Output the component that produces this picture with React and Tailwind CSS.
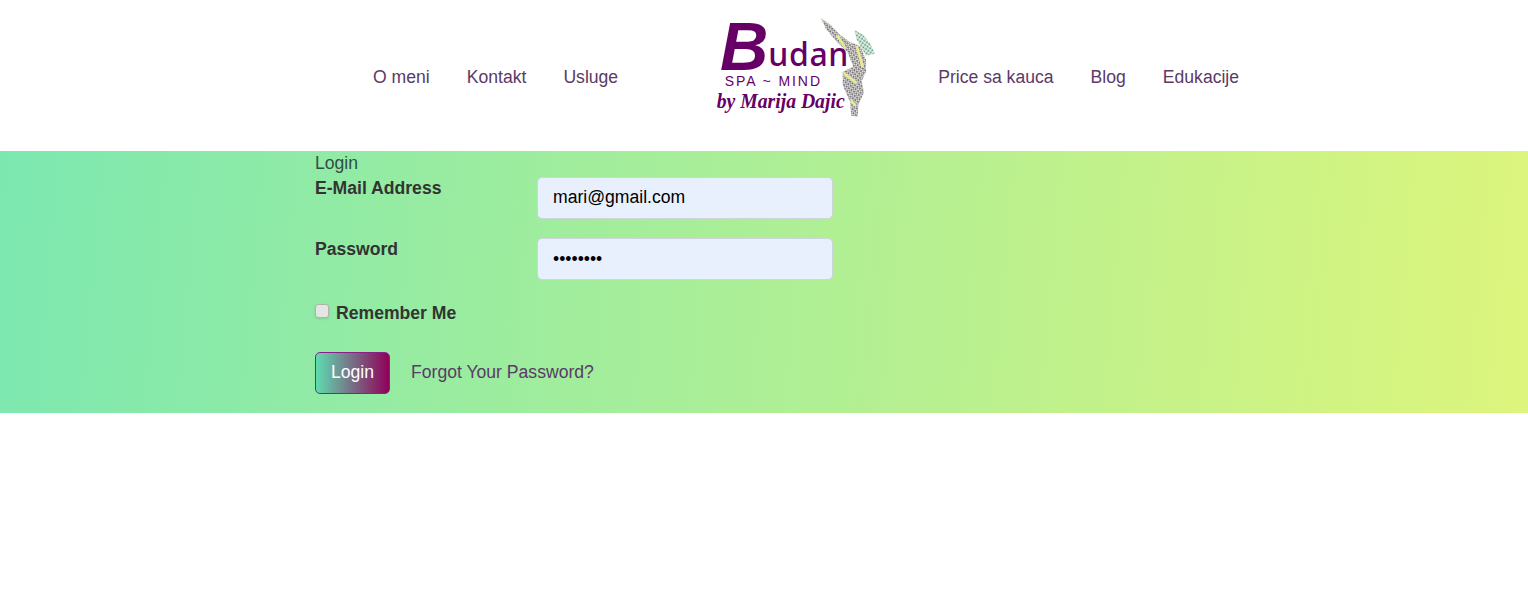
import React from 'react'

const leftLinks = ['O meni', 'Kontakt', 'Usluge']
const rightLinks = ['Price sa kauca', 'Blog', 'Edukacije']

// logo: coordinates are 3x page pixels, same as the zoomed reference
const Logo = () => (
  <svg viewBox="30 6 570 369" width="190" height="123" className="mt-[7px] ml-[82px] shrink-0">
    <defs>
      <pattern id="dots" width="9" height="9" patternUnits="userSpaceOnUse" patternTransform="rotate(35)">
        <rect width="9" height="9" fill="#f0efdc" />
        <circle cx="3" cy="3" r="3" fill="#5b5670" />
        <circle cx="7.5" cy="7.5" r="2" fill="#8a8890" />
      </pattern>
      <pattern id="greenDots" width="9" height="9" patternUnits="userSpaceOnUse" patternTransform="rotate(35)">
        <rect width="9" height="9" fill="#e8f2e8" />
        <circle cx="4" cy="4" r="3" fill="#4f9a7c" />
      </pattern>
    </defs>
    <path fill="url(#dots)" d="M393 40 L422 60 L448 88 L480 112 L498 118 L512 125 L528 165 L528 200 L515 228 L522 262 L505 300 L503 335 L484 332 L480 290 L458 240 L458 200 L490 185 L472 140 L440 110 L408 72 Z" />
    <path fill="url(#greenDots)" d="M493 75 L520 90 L540 115 L555 146 L528 152 L512 125 L500 105 Z" />
    <path fill="#e9ec8e" d="M496 122 L504 122 L522 186 L514 186 Z M462 200 L502 232 L498 238 L460 208 Z M438 92 L446 90 L470 130 L463 132 Z M484 282 L500 300 L496 306 L480 290 Z" />
    <text x="90" y="196" fontFamily="Liberation Sans" fontWeight="700" fontStyle="italic" fontSize="205" fill="#660066" textLength="145" lengthAdjust="spacingAndGlyphs">B</text>
    <text x="235" y="183" fontFamily="Noto Sans" fontWeight="500" fontSize="96" fill="#660066" textLength="240" lengthAdjust="spacing">udan</text>
    <text x="104" y="243" fontFamily="Liberation Sans" fontSize="42" fill="#660066" textLength="286" xmlSpace="preserve">SPA ~ MIND</text>
    <text x="80" y="308" fontFamily="Liberation Serif" fontWeight="700" fontStyle="italic" fontSize="66" fill="#660066" textLength="384" lengthAdjust="spacingAndGlyphs">by Marija Dajic</text>
  </svg>
)

const NavList = ({ links }) => (
  <ul className="flex items-center gap-[37px] pt-[3px]">
    {links.map((l) => (
      <li key={l}>
        <a href="#" className="text-[#5b3a66]">{l}</a>
      </li>
    ))}
  </ul>
)

export default function App() {
  return (
    <div className="min-h-[591px] bg-white text-[17.6px] leading-[24px] font-['Liberation_Sans',Arial,sans-serif]">
      <header className="flex h-[151px] items-center pl-[373px]">
        <NavList links={leftLinks} />
        <div className="self-start">
          <Logo />
        </div>
        <div className="ml-[48px]">
          <NavList links={rightLinks} />
        </div>
      </header>

      <main className="h-[262px] bg-[linear-gradient(95deg,#7ce8b0,#ddf57c)] pl-[315px] text-[#333333]">
        <div className="text-[#2f4f45]">Login</div>

        <form className="mt-[1px]">
          <div className="mb-[18px] flex">
            <label className="w-[222px] font-bold">E-Mail Address</label>
            <input
              type="email"
              readOnly
              value="mari@gmail.com"
              className="mt-[1px] h-[42px] w-[296px] rounded-[5px] border border-[#ced4da] bg-[#e8f0fe] px-[15px] pb-[2px] text-black outline-none"
            />
          </div>

          <div className="flex">
            <label className="w-[222px] font-bold">Password</label>
            <input
              type="password"
              readOnly
              value="password"
              className="mt-[1px] h-[42px] w-[296px] rounded-[5px] border border-[#ced4da] bg-[#e8f0fe] px-[15px] text-black outline-none"
            />
          </div>

          <div className="mt-[21px] flex items-center gap-[7px]">
            <input
              type="checkbox"
              className="mb-[4px] h-[14px] w-[14px] appearance-none rounded-[3px] border border-[#aeb4ae] bg-[#e4e6e4] shadow-sm"
            />
            <label className="font-bold">Remember Me</label>
          </div>

          <div className="mt-[27px] flex items-center gap-[21px]">
            <button
              type="button"
              className="h-[42px] w-[75px] rounded-[5px] border border-[#8a1f8a] bg-[linear-gradient(to_right,#5fdcb0,#90005a)] pb-[2px] text-white"
            >
              Login
            </button>
            <a href="#" className="pb-[3px] text-[#5b3a66]">Forgot Your Password?</a>
          </div>
        </form>
      </main>
    </div>
  )
}
